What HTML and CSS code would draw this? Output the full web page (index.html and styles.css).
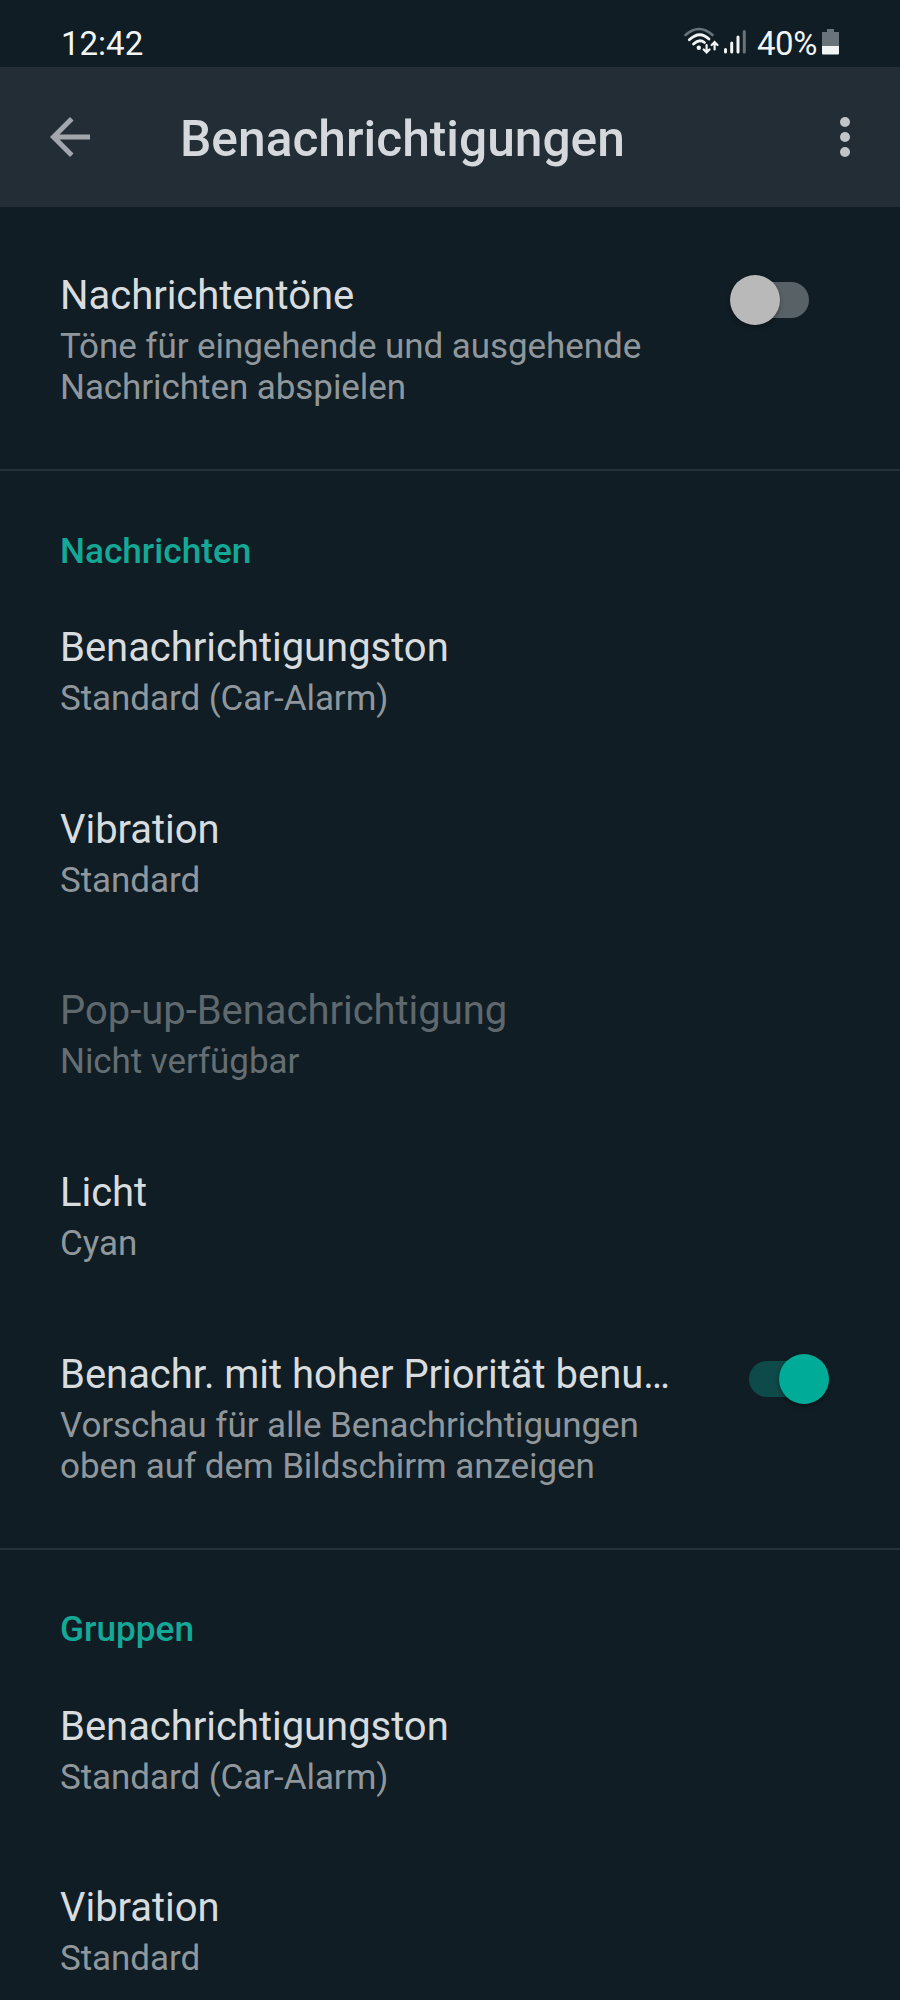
FILE: index.html
```html
<!DOCTYPE html>
<html lang="de">
<head>
<meta charset="utf-8">
<title>Benachrichtigungen</title>
<link rel="stylesheet" href="styles.css">
</head>
<body>
<div class="screen">
  <div class="status">
    <span class="time">12:42</span>
    <svg class="wifi" width="35" height="28" viewBox="0 0 35 28" fill="none" stroke-linecap="round">
      <path d="M1.500 8Q15.200-4 28.500 8" stroke="#68747a" stroke-width="2.600"/>
      <path d="M5.300 12.800Q15.500 3 25 12M9.500 17Q15.200 11.500 20.500 15.500" stroke="#f1f5f6" stroke-width="2.800"/>
      <circle cx="14.800" cy="20.700" r="2.200" fill="#f1f5f6"/>
      <path d="M22.600 18v7M19.700 22.500l2.900 2.900 2.900-2.900M30.600 22.500v-7M27.700 18l2.900-2.900 2.900 2.900" stroke="#f1f5f6" stroke-width="2.200"/>
    </svg>
    <svg class="signal" width="24" height="26" viewBox="0 0 24 26" fill="none" stroke-width="3" stroke-linecap="round">
      <path d="M2.500 20.500v2.500M8.700 14v9M15 8v15" stroke="#f1f5f6"/>
      <path d="M21.300 2.500v20.500" stroke="#68747a"/>
    </svg>
    <span class="percent">40%</span>
    <svg class="battery" width="18" height="28" viewBox="0 0 18 28">
      <path d="M5 1h7v3h5v15H0V4h5z" fill="#68747a"/>
      <path d="M0 18h17v7.500q0 1-1 1H1q-1 0-1-1z" fill="#f1f5f6"/>
    </svg>
  </div>
  <header class="bar">
    <svg class="back" width="40" height="40" viewBox="4 4 16 16" fill="#a1a7ac"><path d="M20 11H7.830l5.590-5.590L12 4l-8 8 8 8 1.410-1.410L7.830 13H20z"/></svg>
    <h1 class="heading">Benachrichtigungen</h1>
    <svg class="more" width="10" height="40" viewBox="0 0 10 40" fill="#c0c5c9"><circle cx="5" cy="5" r="5"/><circle cx="5" cy="20" r="5"/><circle cx="5" cy="35" r="5"/></svg>
  </header>
  <main>
    <section class="group first">
      <div class="row">
        <div class="text"><div class="title">Nachrichtentöne</div><div class="sub">Töne für eingehende und ausgehende Nachrichten abspielen</div></div>
        <div class="switch"><span class="thumb"></span></div>
      </div>
    </section>
    <section class="group">
      <h2 class="label">Nachrichten</h2>
      <div class="row"><div class="text"><div class="title">Benachrichtigungston</div><div class="sub">Standard (Car-Alarm)</div></div></div>
      <div class="row"><div class="text"><div class="title">Vibration</div><div class="sub">Standard</div></div></div>
      <div class="row disabled"><div class="text"><div class="title">Pop-up-Benachrichtigung</div><div class="sub">Nicht verfügbar</div></div></div>
      <div class="row"><div class="text"><div class="title">Licht</div><div class="sub">Cyan</div></div></div>
      <div class="row">
        <div class="text"><div class="title">Benachr. mit hoher Priorität benu…</div><div class="sub">Vorschau für alle Benachrichtigungen oben auf dem Bildschirm anzeigen</div></div>
        <div class="switch on"><span class="thumb"></span></div>
      </div>
    </section>
    <section class="group">
      <h2 class="label">Gruppen</h2>
      <div class="row"><div class="text"><div class="title">Benachrichtigungston</div><div class="sub">Standard (Car-Alarm)</div></div></div>
      <div class="row"><div class="text"><div class="title">Vibration</div><div class="sub">Standard</div></div></div>
    </section>
  </main>
</div>
</body>
</html>
```
FILE: styles.css
```css
* { box-sizing: border-box; }
body { margin: 0; background: #101d24; font-family: Roboto, "Liberation Sans", sans-serif; }
.screen { width: 900px; height: 2000px; overflow: hidden; }

.status { display: flex; height: 67px; padding: 24px 60px 0 61px; color: #f1f5f6; font-size: 33px; line-height: 40px; }
.time { flex: 1; }
.wifi { margin: 3px 4px 0 0; }
.signal { margin: 5px 10px 0 0; }
.percent { letter-spacing: -0.4px; }
.battery { margin: 4px 0 0 5px; }

.bar { display: flex; align-items: center; height: 140px; padding: 0 50px; background: #232d35; }
.heading { flex: 1; margin: 4px 0 0 90px; color: #d5d9dd; font-size: 49.700px; font-weight: 500; line-height: 60px; }

.group { padding-bottom: 17.600px; border-bottom: 2px solid #263238; }
.group.first { padding-top: 22px; }
.label { margin: 0; padding: 59.700px 60px 8.800px; color: #14a897; font-size: 35.200px; font-weight: 500; line-height: 41px; }
.row { display: flex; justify-content: space-between; padding: 43.350px 71px 43.350px 60px; }
.text { width: 620px; }
.title { margin-bottom: 7px; color: #d8dcdf; font-size: 40px; line-height: 47px; letter-spacing: -0.03px; white-space: nowrap; }
.sub { color: #8f979c; font-size: 35px; line-height: 41px; letter-spacing: -0.07px; }
.disabled .title { color: #5f686d; }
.disabled .sub { color: #656e73; }

.switch { position: relative; width: 60px; height: 36px; margin: 10px 20px 0 0; border-radius: 18px; background: #586166; }
.thumb { position: absolute; top: -7px; left: -19.500px; width: 50px; height: 50px; border-radius: 50%; background: #b9b9b9; box-shadow: 0 2px 4px rgba(0, 0, 0, 0.35); }
.switch.on { background: #0d4a49; }
.on .thumb { left: 30px; background: #00ab98; }
```
